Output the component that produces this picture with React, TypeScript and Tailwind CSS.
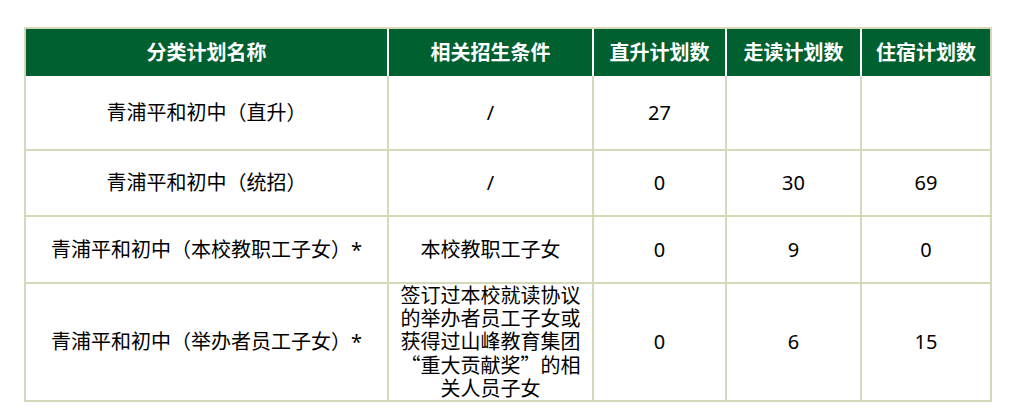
const rows = [
  { name: '青浦平和初中（直升）', cond: '/', direct: '27', day: '', board: '', h: 'h-[75px]' },
  { name: '青浦平和初中（统招）', cond: '/', direct: '0', day: '30', board: '69', h: 'h-[66px]' },
  { name: '青浦平和初中（本校教职工子女）*', cond: '本校教职工子女', direct: '0', day: '9', board: '0', h: 'h-[67px]' },
];

const headers = ['分类计划名称', '相关招生条件', '直升计划数', '走读计划数', '住宿计划数'];

const cell = 'border-r-2 border-b-2 border-[#d5d8b9] text-center align-middle p-0';

export default function App() {
  return (
    <div className="bg-white w-[1016px] h-[418px] pt-[27px] pl-[24px] font-['Noto_Sans','Noto_Sans_CJK_SC',sans-serif] text-[20px] text-black">
      <table className="table-fixed border-separate border-spacing-0 border-l-2 border-t-2 border-[#d5d8b9] w-[968px]">
        <colgroup>
          <col className="w-[363px]" />
          <col className="w-[205px]" />
          <col className="w-[133px]" />
          <col className="w-[135px]" />
          <col className="w-[130px]" />
        </colgroup>
        <thead>
          <tr className="h-[47px] bg-[#006030]">
            {headers.map((h, i) => (
              <th
                key={h}
                className={
                  'p-0 text-center align-middle font-bold text-white text-[20px] border-r-2 ' +
                  (i === headers.length - 1 ? 'border-[#d5d8b9]' : 'border-white')
                }
              >
                {h}
              </th>
            ))}
          </tr>
        </thead>
        <tbody>
          {rows.map((r) => (
            <tr key={r.name} className={r.h}>
              <td className={cell}>{r.name}</td>
              <td className={cell}>{r.cond}</td>
              <td className={cell}>{r.direct}</td>
              <td className={cell}>{r.day}</td>
              <td className={cell}>{r.board}</td>
            </tr>
          ))}
          <tr className="h-[118px]">
            <td className={cell}>青浦平和初中（举办者员工子女）*</td>
            <td className={cell + ' leading-[23px]'}>
              签订过本校就读协议
              <br />
              的举办者员工子女或
              <br />
              获得过山峰教育集团
              <br />
              <span className="font-['Noto_Sans_CJK_SC',sans-serif]">“重大贡献奖”的相</span>
              <br />
              关人员子女
            </td>
            <td className={cell}>0</td>
            <td className={cell}>6</td>
            <td className={cell}>15</td>
          </tr>
        </tbody>
      </table>
    </div>
  );
}
